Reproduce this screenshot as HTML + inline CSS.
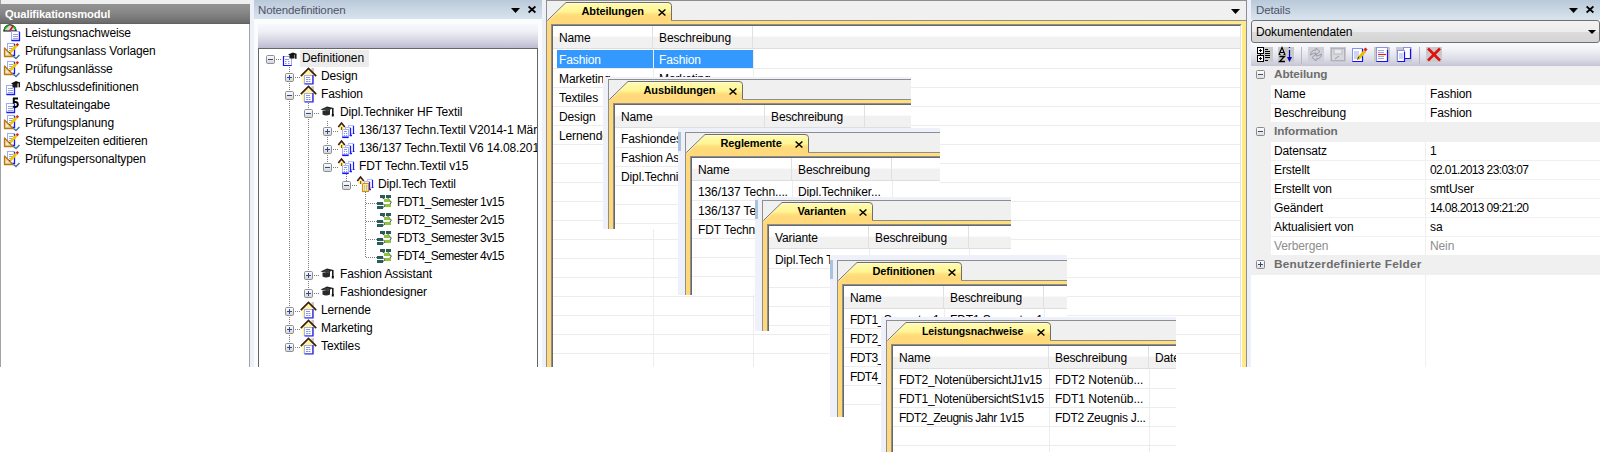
<!DOCTYPE html><html><head><meta charset="utf-8"><style>
*{margin:0;padding:0;box-sizing:border-box}
html,body{width:1600px;height:452px;overflow:hidden;background:#fff}
body{position:relative;font-family:"Liberation Sans",sans-serif;font-size:11.5px;color:#000}
.a{position:absolute}
.t{position:absolute;white-space:nowrap;line-height:14px}
svg{position:absolute;overflow:visible}
.clip{position:absolute;overflow:hidden}
</style></head><body>
<div class="a" style="left:0px;top:0px;width:1600px;height:367px;background:#eef1fa"></div>
<div class="a" style="left:0px;top:0px;width:250px;height:367px;background:#fff;border-left:1px solid #a3a3a3;border-right:1px solid #a3a3a3"></div>
<div class="a" style="left:0px;top:0px;width:250px;height:4px;background:#efefef;border-left:1px solid #a3a3a3"></div>
<div class="a" style="left:0px;top:4px;width:250px;height:20px;background:linear-gradient(#939393,#8a8a8a 35%,#7c7c7c 65%,#6c6c6c 92%,#5c5c5c)"></div>
<div class="t" style="left:5px;top:7.0px;font-size:11.2px;font-weight:bold;color:#fff;letter-spacing:-0.12px;">Qualifikationsmodul</div>
<svg style="left:3px;top:24px" width="18" height="18" viewBox="0 0 18 18"><path d="M0.8 7 A6.2 6.2 0 0 1 13.2 7 Z" fill="#d6d6d6" stroke="#000" stroke-width="1.1"/><path d="M1.8 5.2 A5.5 5.5 0 0 1 5 1.8" stroke="#10c010" stroke-width="1.8" fill="none"/><path d="M9.5 1.8 A5.5 5.5 0 0 1 12.4 5.2" stroke="#10c010" stroke-width="1.8" fill="none"/><path d="M7 6.5 L10 2" stroke="#e01010" stroke-width="1.6"/><rect x="8.5" y="7.5" width="8" height="9" fill="#fff" stroke="#a0a8f0"/><path d="M8.5 16.5 H16.5 V8" stroke="#1818ff" stroke-width="1.3" fill="none"/><path d="M10 10.5h5M10 12.5h5M10 14.5h5" stroke="#98a2dc"/></svg>
<div class="t" style="left:25px;top:25.5px;font-size:12px;color:#000;letter-spacing:-0.12px;">Leistungsnachweise</div>
<svg style="left:3px;top:42px" width="18" height="18" viewBox="0 0 18 18"><rect x="4.5" y="1.5" width="7" height="12" fill="#fff" stroke="#a0a8f0"/><path d="M4.5 13.5 H11.5 V2" stroke="#1818ff" stroke-width="1.3" fill="none"/><path d="M6 4.5h4M6 6.5h4M6 8.5h4" stroke="#98a2dc"/><path d="M1.5 6 L1.5 14.5 L10 14.5 Z" fill="#f0d8a0" stroke="#b87818" stroke-width="1.3" stroke-linejoin="round"/><path d="M3.5 10.5 L3.5 12.5 L5.5 12.5 Z" fill="#fff"/><path d="M7.5 10 L14 3" stroke="#f0c800" stroke-width="2.6"/><path d="M7.2 10.3 L6.8 11" stroke="#333" stroke-width="1.5"/><path d="M13.6 3.4 L15.2 1.8" stroke="#e02020" stroke-width="2.4"/><path d="M10.5 14.5 L13 16.5 L16.5 13" stroke="#4a78a8" stroke-width="1.6" fill="none"/></svg>
<div class="t" style="left:25px;top:43.5px;font-size:12px;color:#000;letter-spacing:-0.12px;">Prüfungsanlass Vorlagen</div>
<svg style="left:3px;top:60px" width="18" height="18" viewBox="0 0 18 18"><rect x="4.5" y="1.5" width="7" height="12" fill="#fff" stroke="#a0a8f0"/><path d="M4.5 13.5 H11.5 V2" stroke="#1818ff" stroke-width="1.3" fill="none"/><path d="M6 4.5h4M6 6.5h4M6 8.5h4" stroke="#98a2dc"/><path d="M1.5 6 L1.5 14.5 L10 14.5 Z" fill="#f0d8a0" stroke="#b87818" stroke-width="1.3" stroke-linejoin="round"/><path d="M3.5 10.5 L3.5 12.5 L5.5 12.5 Z" fill="#fff"/><path d="M7.5 10 L14 3" stroke="#f0c800" stroke-width="2.6"/><path d="M7.2 10.3 L6.8 11" stroke="#333" stroke-width="1.5"/><path d="M13.6 3.4 L15.2 1.8" stroke="#e02020" stroke-width="2.4"/><path d="M10.5 14.5 L13 16.5 L16.5 13" stroke="#4a78a8" stroke-width="1.6" fill="none"/></svg>
<div class="t" style="left:25px;top:61.5px;font-size:12px;color:#000;letter-spacing:-0.12px;">Prüfungsanlässe</div>
<svg style="left:3px;top:78px" width="18" height="18" viewBox="0 0 18 18"><rect x="3.5" y="7.5" width="8" height="9" fill="#fff" stroke="#a0a8f0"/><path d="M3.5 16.5 H11.5 V8" stroke="#1818ff" stroke-width="1.3" fill="none"/><path d="M5 10.5h5M5 12.5h5M5 14.5h5" stroke="#98a2dc"/><path d="M8 5.5 L13 3 L17 4.5 L12 7 Z" fill="#111"/><rect x="9.5" y="6" width="5" height="3.5" fill="#1a1a1a"/><path d="M16.3 4.3v5" stroke="#111" stroke-width="1.5"/></svg>
<div class="t" style="left:25px;top:79.5px;font-size:12px;color:#000;letter-spacing:-0.12px;">Abschlussdefinitionen</div>
<svg style="left:3px;top:96px" width="18" height="18" viewBox="0 0 18 18"><rect x="3.5" y="7.5" width="8" height="9" fill="#fff" stroke="#a0a8f0"/><path d="M3.5 16.5 H11.5 V8" stroke="#1818ff" stroke-width="1.3" fill="none"/><path d="M5 10.5h5M5 12.5h5M5 14.5h5" stroke="#98a2dc"/><path d="M10 2.5 H15 M10.8 2 V6.5 Q13 5.5 14.5 7 Q15.5 9 14 10.5 Q12 11.8 10 10.5" stroke="#000" stroke-width="2" fill="none"/></svg>
<div class="t" style="left:25px;top:97.5px;font-size:12px;color:#000;letter-spacing:-0.12px;">Resultateingabe</div>
<svg style="left:3px;top:114px" width="18" height="18" viewBox="0 0 18 18"><rect x="4.5" y="1.5" width="7" height="12" fill="#fff" stroke="#a0a8f0"/><path d="M4.5 13.5 H11.5 V2" stroke="#1818ff" stroke-width="1.3" fill="none"/><path d="M6 4.5h4M6 6.5h4M6 8.5h4" stroke="#98a2dc"/><path d="M1.5 6 L1.5 14.5 L10 14.5 Z" fill="#f0d8a0" stroke="#b87818" stroke-width="1.3" stroke-linejoin="round"/><path d="M3.5 10.5 L3.5 12.5 L5.5 12.5 Z" fill="#fff"/><path d="M7.5 10 L14 3" stroke="#f0c800" stroke-width="2.6"/><path d="M7.2 10.3 L6.8 11" stroke="#333" stroke-width="1.5"/><path d="M13.6 3.4 L15.2 1.8" stroke="#e02020" stroke-width="2.4"/><path d="M10.5 14.5 L13 16.5 L16.5 13" stroke="#4a78a8" stroke-width="1.6" fill="none"/></svg>
<div class="t" style="left:25px;top:115.5px;font-size:12px;color:#000;letter-spacing:-0.12px;">Prüfungsplanung</div>
<svg style="left:3px;top:132px" width="18" height="18" viewBox="0 0 18 18"><rect x="4.5" y="1.5" width="7" height="12" fill="#fff" stroke="#a0a8f0"/><path d="M4.5 13.5 H11.5 V2" stroke="#1818ff" stroke-width="1.3" fill="none"/><path d="M6 4.5h4M6 6.5h4M6 8.5h4" stroke="#98a2dc"/><path d="M1.5 6 L1.5 14.5 L10 14.5 Z" fill="#f0d8a0" stroke="#b87818" stroke-width="1.3" stroke-linejoin="round"/><path d="M3.5 10.5 L3.5 12.5 L5.5 12.5 Z" fill="#fff"/><path d="M7.5 10 L14 3" stroke="#f0c800" stroke-width="2.6"/><path d="M7.2 10.3 L6.8 11" stroke="#333" stroke-width="1.5"/><path d="M13.6 3.4 L15.2 1.8" stroke="#e02020" stroke-width="2.4"/><path d="M10.5 14.5 L13 16.5 L16.5 13" stroke="#4a78a8" stroke-width="1.6" fill="none"/></svg>
<div class="t" style="left:25px;top:133.5px;font-size:12px;color:#000;letter-spacing:-0.12px;">Stempelzeiten editieren</div>
<svg style="left:3px;top:150px" width="18" height="18" viewBox="0 0 18 18"><rect x="4.5" y="1.5" width="7" height="12" fill="#fff" stroke="#a0a8f0"/><path d="M4.5 13.5 H11.5 V2" stroke="#1818ff" stroke-width="1.3" fill="none"/><path d="M6 4.5h4M6 6.5h4M6 8.5h4" stroke="#98a2dc"/><path d="M1.5 6 L1.5 14.5 L10 14.5 Z" fill="#f0d8a0" stroke="#b87818" stroke-width="1.3" stroke-linejoin="round"/><path d="M3.5 10.5 L3.5 12.5 L5.5 12.5 Z" fill="#fff"/><path d="M7.5 10 L14 3" stroke="#f0c800" stroke-width="2.6"/><path d="M7.2 10.3 L6.8 11" stroke="#333" stroke-width="1.5"/><path d="M13.6 3.4 L15.2 1.8" stroke="#e02020" stroke-width="2.4"/><path d="M10.5 14.5 L13 16.5 L16.5 13" stroke="#4a78a8" stroke-width="1.6" fill="none"/></svg>
<div class="t" style="left:25px;top:151.5px;font-size:12px;color:#000;letter-spacing:-0.12px;">Prüfungspersonaltypen</div>
<div class="a" style="left:254px;top:0px;width:288px;height:367px;background:#fbfcfe"></div>
<div class="a" style="left:254px;top:0px;width:288px;height:19px;background:linear-gradient(#bac9d9,#d8e3ee)"></div>
<div class="t" style="left:258px;top:3.0px;font-size:11.5px;color:#50526a;letter-spacing:-0.12px;">Notendefinitionen</div>
<svg style="left:511px;top:8px" width="9" height="5" viewBox="0 0 9 5"><path d="M0 0H9L4.5 5Z" fill="#000"/></svg>
<svg style="left:528px;top:6px" width="8" height="7" viewBox="0 0 8 7"><path d="M0.6 0.5L7.4 6.5M7.4 0.5L0.6 6.5" stroke="#000" stroke-width="1.7"/></svg>
<div class="a" style="left:258px;top:24px;width:280px;height:24px;background:linear-gradient(#f7f8fc,#f0f1f6 30%,#d4d4e2 70%,#bcbcd2)"></div>
<div class="a" style="left:258px;top:48px;width:280px;height:319px;background:#fff;border:1px solid #666;border-bottom:none"></div>
<div class="clip" style="left:259px;top:49px;width:278px;height:318px">
<div class="a" style="left:30px;top:18px;width:1px;height:281px;background:repeating-linear-gradient(#7c7c7c 0 1px,transparent 1px 2px)"></div>
<div class="a" style="left:49px;top:54px;width:1px;height:191px;background:repeating-linear-gradient(#7c7c7c 0 1px,transparent 1px 2px)"></div>
<div class="a" style="left:68px;top:72px;width:1px;height:47px;background:repeating-linear-gradient(#7c7c7c 0 1px,transparent 1px 2px)"></div>
<div class="a" style="left:87px;top:125px;width:1px;height:11px;background:repeating-linear-gradient(#7c7c7c 0 1px,transparent 1px 2px)"></div>
<div class="a" style="left:106px;top:143px;width:1px;height:66px;background:repeating-linear-gradient(#7c7c7c 0 1px,transparent 1px 2px)"></div>
<div class="a" style="left:41px;top:1px;width:69px;height:17px;background:#ececec"></div>
<div class="a" style="left:17px;top:10px;width:6px;height:1px;background:repeating-linear-gradient(90deg,#7c7c7c 0 1px,transparent 1px 2px)"></div>
<svg style="left:7px;top:6px" width="9" height="9" viewBox="0 0 9 9"><defs><linearGradient id="eg" x1="0" y1="0" x2="0" y2="1"><stop offset="0" stop-color="#fff"/><stop offset="1" stop-color="#d4d4d4"/></linearGradient></defs><rect x="0.5" y="0.5" width="8" height="8" rx="1.2" fill="url(#eg)" stroke="#8f8f8f"/><path d="M2 4.5H7" stroke="#2b4a9a" stroke-width="1"/></svg>
<svg style="left:24px;top:3px" width="14" height="15" viewBox="0 0 14 15"><rect x="0.5" y="4.5" width="8" height="9" fill="#fff" stroke="#9aa6f0"/><path d="M0.5 4 V13.5 H8.5" stroke="#1010ff" stroke-width="1.2" fill="none"/><path d="M2 7.5h4M2 9.5h1.5M5 9.5h1.5M2 11.5h1.5M5 11.5h1.5" stroke="#8a96d8"/><path d="M5 2.5 L10 0.5 L13.5 2 L8.5 4 Z" fill="#111"/><rect x="6.5" y="3" width="5" height="3.5" fill="#1a1a1a"/><path d="M12.8 1.8v5" stroke="#111" stroke-width="1.5"/></svg>
<div class="t" style="left:43px;top:1.5px;font-size:12px;color:#000;letter-spacing:-0.12px;">Definitionen</div>
<div class="a" style="left:36px;top:28px;width:6px;height:1px;background:repeating-linear-gradient(90deg,#7c7c7c 0 1px,transparent 1px 2px)"></div>
<svg style="left:26px;top:24px" width="9" height="9" viewBox="0 0 9 9"><defs><linearGradient id="eg" x1="0" y1="0" x2="0" y2="1"><stop offset="0" stop-color="#fff"/><stop offset="1" stop-color="#d4d4d4"/></linearGradient></defs><rect x="0.5" y="0.5" width="8" height="8" rx="1.2" fill="url(#eg)" stroke="#8f8f8f"/><path d="M2 4.5H7" stroke="#2b4a9a" stroke-width="1"/><path d="M4.5 2V7" stroke="#2b4a9a" stroke-width="1"/></svg>
<svg style="left:41px;top:18px" width="18" height="18" viewBox="0 0 18 18"><rect x="11.5" y="1" width="2.5" height="6" fill="#c8c8c8"/><path d="M2.5 8 L2.5 17 L14.5 17 L14.5 8 L8.5 2.5 Z" fill="#fff5a0"/><path d="M0.8 9.2 L8.5 1.5 L16.2 9.2" fill="none" stroke="#3c1e0a" stroke-width="1.7"/><rect x="4.5" y="8.5" width="8" height="8" fill="#fff" stroke="#a8b0f0"/><path d="M4.5 17 H13 V8" stroke="#1a1aff" stroke-width="1.2" fill="none"/><path d="M6 10.5h4M6 12.5h2M8.5 12.5h2M6 14.5h2M8.5 14.5h2" stroke="#8a96d8"/></svg>
<div class="t" style="left:62px;top:19.5px;font-size:12px;color:#000;letter-spacing:-0.12px;">Design</div>
<div class="a" style="left:36px;top:46px;width:6px;height:1px;background:repeating-linear-gradient(90deg,#7c7c7c 0 1px,transparent 1px 2px)"></div>
<svg style="left:26px;top:42px" width="9" height="9" viewBox="0 0 9 9"><defs><linearGradient id="eg" x1="0" y1="0" x2="0" y2="1"><stop offset="0" stop-color="#fff"/><stop offset="1" stop-color="#d4d4d4"/></linearGradient></defs><rect x="0.5" y="0.5" width="8" height="8" rx="1.2" fill="url(#eg)" stroke="#8f8f8f"/><path d="M2 4.5H7" stroke="#2b4a9a" stroke-width="1"/></svg>
<svg style="left:41px;top:36px" width="18" height="18" viewBox="0 0 18 18"><rect x="11.5" y="1" width="2.5" height="6" fill="#c8c8c8"/><path d="M2.5 8 L2.5 17 L14.5 17 L14.5 8 L8.5 2.5 Z" fill="#fff5a0"/><path d="M0.8 9.2 L8.5 1.5 L16.2 9.2" fill="none" stroke="#3c1e0a" stroke-width="1.7"/><rect x="4.5" y="8.5" width="8" height="8" fill="#fff" stroke="#a8b0f0"/><path d="M4.5 17 H13 V8" stroke="#1a1aff" stroke-width="1.2" fill="none"/><path d="M6 10.5h4M6 12.5h2M8.5 12.5h2M6 14.5h2M8.5 14.5h2" stroke="#8a96d8"/></svg>
<div class="t" style="left:62px;top:37.5px;font-size:12px;color:#000;letter-spacing:-0.12px;">Fashion</div>
<div class="a" style="left:55px;top:64px;width:6px;height:1px;background:repeating-linear-gradient(90deg,#7c7c7c 0 1px,transparent 1px 2px)"></div>
<svg style="left:45px;top:60px" width="9" height="9" viewBox="0 0 9 9"><defs><linearGradient id="eg" x1="0" y1="0" x2="0" y2="1"><stop offset="0" stop-color="#fff"/><stop offset="1" stop-color="#d4d4d4"/></linearGradient></defs><rect x="0.5" y="0.5" width="8" height="8" rx="1.2" fill="url(#eg)" stroke="#8f8f8f"/><path d="M2 4.5H7" stroke="#2b4a9a" stroke-width="1"/></svg>
<svg style="left:61px;top:57px" width="14" height="11" viewBox="0 0 14 11"><path d="M0.5 3.5 L7 0.5 L13.5 2 L7 5 Z" fill="#222"/><path d="M2.5 4.5 L2.5 8.5 Q6 10.5 10 8.5 L10 3.5 L7 5 Z" fill="#2a2a2a"/><path d="M3.5 3.5 Q7 2.5 9 3" stroke="#666" stroke-width="0.7" fill="none"/><path d="M12.8 2 V9" stroke="#111" stroke-width="1.5"/><rect x="11.8" y="8" width="2" height="2.5" fill="#111"/></svg>
<div class="t" style="left:81px;top:55.5px;font-size:12px;color:#000;letter-spacing:-0.12px;">Dipl.Techniker HF Textil</div>
<div class="a" style="left:74px;top:82px;width:6px;height:1px;background:repeating-linear-gradient(90deg,#7c7c7c 0 1px,transparent 1px 2px)"></div>
<svg style="left:64px;top:78px" width="9" height="9" viewBox="0 0 9 9"><defs><linearGradient id="eg" x1="0" y1="0" x2="0" y2="1"><stop offset="0" stop-color="#fff"/><stop offset="1" stop-color="#d4d4d4"/></linearGradient></defs><rect x="0.5" y="0.5" width="8" height="8" rx="1.2" fill="url(#eg)" stroke="#8f8f8f"/><path d="M2 4.5H7" stroke="#2b4a9a" stroke-width="1"/><path d="M4.5 2V7" stroke="#2b4a9a" stroke-width="1"/></svg>
<svg style="left:79px;top:73px" width="17" height="17" viewBox="0 0 17 17"><rect x="10.5" y="3.5" width="5" height="8" fill="#fff" stroke="#b8c0f8"/><path d="M15.5 4 V11.5 H16.5" stroke="#1a1aff" stroke-width="1.2" fill="none"/><rect x="7.5" y="5.5" width="5" height="8" fill="#fff" stroke="#b0b8f8"/><path d="M12.5 6 V13.5 H14" stroke="#1a1aff" stroke-width="1.3" fill="none"/><rect x="4.5" y="7.5" width="6" height="8" fill="#fff" stroke="#a8b0f8"/><path d="M4.3 15.3 H10.5" stroke="#1010ff" stroke-width="1.6"/><path d="M6 9.5h3" stroke="#8890e8"/><rect x="5.8" y="11" width="1.2" height="1" fill="#8890e8"/><rect x="8" y="11" width="1.2" height="1" fill="#8890e8"/><rect x="5.8" y="13" width="1.2" height="1" fill="#8890e8"/><rect x="8" y="13" width="1.2" height="1" fill="#8890e8"/><rect x="1.5" y="4" width="4" height="4" fill="#fff080"/><rect x="3" y="5" width="1.2" height="3" fill="#8a5a20"/><path d="M0.3 5 L3.5 1 L6.8 5" fill="none" stroke="#3c1e0a" stroke-width="1.6"/></svg>
<div class="t" style="left:100px;top:73.5px;font-size:12px;color:#000;letter-spacing:-0.12px;">136/137 Techn.Textil V2014-1 März</div>
<div class="a" style="left:74px;top:100px;width:6px;height:1px;background:repeating-linear-gradient(90deg,#7c7c7c 0 1px,transparent 1px 2px)"></div>
<svg style="left:64px;top:96px" width="9" height="9" viewBox="0 0 9 9"><defs><linearGradient id="eg" x1="0" y1="0" x2="0" y2="1"><stop offset="0" stop-color="#fff"/><stop offset="1" stop-color="#d4d4d4"/></linearGradient></defs><rect x="0.5" y="0.5" width="8" height="8" rx="1.2" fill="url(#eg)" stroke="#8f8f8f"/><path d="M2 4.5H7" stroke="#2b4a9a" stroke-width="1"/><path d="M4.5 2V7" stroke="#2b4a9a" stroke-width="1"/></svg>
<svg style="left:79px;top:91px" width="17" height="17" viewBox="0 0 17 17"><rect x="10.5" y="3.5" width="5" height="8" fill="#fff" stroke="#b8c0f8"/><path d="M15.5 4 V11.5 H16.5" stroke="#1a1aff" stroke-width="1.2" fill="none"/><rect x="7.5" y="5.5" width="5" height="8" fill="#fff" stroke="#b0b8f8"/><path d="M12.5 6 V13.5 H14" stroke="#1a1aff" stroke-width="1.3" fill="none"/><rect x="4.5" y="7.5" width="6" height="8" fill="#fff" stroke="#a8b0f8"/><path d="M4.3 15.3 H10.5" stroke="#1010ff" stroke-width="1.6"/><path d="M6 9.5h3" stroke="#8890e8"/><rect x="5.8" y="11" width="1.2" height="1" fill="#8890e8"/><rect x="8" y="11" width="1.2" height="1" fill="#8890e8"/><rect x="5.8" y="13" width="1.2" height="1" fill="#8890e8"/><rect x="8" y="13" width="1.2" height="1" fill="#8890e8"/><rect x="1.5" y="4" width="4" height="4" fill="#fff080"/><rect x="3" y="5" width="1.2" height="3" fill="#8a5a20"/><path d="M0.3 5 L3.5 1 L6.8 5" fill="none" stroke="#3c1e0a" stroke-width="1.6"/></svg>
<div class="t" style="left:100px;top:91.5px;font-size:12px;color:#000;letter-spacing:-0.12px;">136/137 Techn.Textil V6 14.08.2013</div>
<div class="a" style="left:74px;top:118px;width:6px;height:1px;background:repeating-linear-gradient(90deg,#7c7c7c 0 1px,transparent 1px 2px)"></div>
<svg style="left:64px;top:114px" width="9" height="9" viewBox="0 0 9 9"><defs><linearGradient id="eg" x1="0" y1="0" x2="0" y2="1"><stop offset="0" stop-color="#fff"/><stop offset="1" stop-color="#d4d4d4"/></linearGradient></defs><rect x="0.5" y="0.5" width="8" height="8" rx="1.2" fill="url(#eg)" stroke="#8f8f8f"/><path d="M2 4.5H7" stroke="#2b4a9a" stroke-width="1"/></svg>
<svg style="left:79px;top:109px" width="17" height="17" viewBox="0 0 17 17"><rect x="10.5" y="3.5" width="5" height="8" fill="#fff" stroke="#b8c0f8"/><path d="M15.5 4 V11.5 H16.5" stroke="#1a1aff" stroke-width="1.2" fill="none"/><rect x="7.5" y="5.5" width="5" height="8" fill="#fff" stroke="#b0b8f8"/><path d="M12.5 6 V13.5 H14" stroke="#1a1aff" stroke-width="1.3" fill="none"/><rect x="4.5" y="7.5" width="6" height="8" fill="#fff" stroke="#a8b0f8"/><path d="M4.3 15.3 H10.5" stroke="#1010ff" stroke-width="1.6"/><path d="M6 9.5h3" stroke="#8890e8"/><rect x="5.8" y="11" width="1.2" height="1" fill="#8890e8"/><rect x="8" y="11" width="1.2" height="1" fill="#8890e8"/><rect x="5.8" y="13" width="1.2" height="1" fill="#8890e8"/><rect x="8" y="13" width="1.2" height="1" fill="#8890e8"/><rect x="1.5" y="4" width="4" height="4" fill="#fff080"/><rect x="3" y="5" width="1.2" height="3" fill="#8a5a20"/><path d="M0.3 5 L3.5 1 L6.8 5" fill="none" stroke="#3c1e0a" stroke-width="1.6"/></svg>
<div class="t" style="left:100px;top:109.5px;font-size:12px;color:#000;letter-spacing:-0.12px;">FDT Techn.Textil v15</div>
<div class="a" style="left:93px;top:136px;width:6px;height:1px;background:repeating-linear-gradient(90deg,#7c7c7c 0 1px,transparent 1px 2px)"></div>
<svg style="left:83px;top:132px" width="9" height="9" viewBox="0 0 9 9"><defs><linearGradient id="eg" x1="0" y1="0" x2="0" y2="1"><stop offset="0" stop-color="#fff"/><stop offset="1" stop-color="#d4d4d4"/></linearGradient></defs><rect x="0.5" y="0.5" width="8" height="8" rx="1.2" fill="url(#eg)" stroke="#8f8f8f"/><path d="M2 4.5H7" stroke="#2b4a9a" stroke-width="1"/></svg>
<svg style="left:98px;top:127px" width="17" height="17" viewBox="0 0 17 17"><rect x="10.5" y="3.5" width="5" height="8" fill="#fff" stroke="#b8c0f8"/><path d="M15.5 4 V11.5 H16.5" stroke="#1a1aff" stroke-width="1.2" fill="none"/><rect x="7.5" y="5.5" width="5" height="8" fill="#fff" stroke="#b0b8f8"/><path d="M12.5 6 V13.5 H14" stroke="#1a1aff" stroke-width="1.3" fill="none"/><rect x="5.5" y="7.5" width="6" height="8" fill="#fff8a8" stroke="#d88a20" stroke-width="1.2"/><rect x="7" y="9.5" width="1.2" height="1" fill="#60a060"/><rect x="9" y="9.5" width="1.2" height="1" fill="#c06040"/><rect x="7" y="11.5" width="1.2" height="1" fill="#909090"/><rect x="9" y="11.5" width="1.2" height="1" fill="#909090"/><rect x="7" y="13.5" width="1.2" height="1" fill="#60c060"/><rect x="9" y="13.5" width="1.2" height="1" fill="#60c060"/><rect x="1.5" y="4" width="4" height="4" fill="#fff080"/><rect x="3" y="5" width="1.2" height="3" fill="#8a5a20"/><path d="M0.3 5 L3.5 1 L6.8 5" fill="none" stroke="#3c1e0a" stroke-width="1.6"/></svg>
<div class="t" style="left:119px;top:127.5px;font-size:12px;color:#000;letter-spacing:-0.12px;">Dipl.Tech Textil</div>
<div class="a" style="left:107px;top:154px;width:11px;height:1px;background:repeating-linear-gradient(90deg,#7c7c7c 0 1px,transparent 1px 2px)"></div>
<svg style="left:118px;top:146px" width="16" height="15" viewBox="0 0 16 15"><rect x="3" y="0" width="5" height="3" fill="#2b5c5c"/><rect x="9" y="0" width="5" height="3" fill="#2b5c5c"/><path d="M5.5 3 L9 5 M11.5 3 L10 5" stroke="#111" stroke-width="0.8"/><rect x="7" y="4" width="6" height="3" fill="#8cc63c"/><path d="M13 5.5 Q15.5 7 13 9" stroke="#111" stroke-width="0.8" fill="none"/><rect x="0" y="7" width="6" height="3" fill="#2b5c5c"/><rect x="0" y="11" width="6" height="3" fill="#2b5c5c"/><rect x="8" y="9" width="6" height="3" fill="#8cc63c"/><path d="M6 8.5 Q7 10 8 10.5 M6 12.5 Q7 11.5 8 11" stroke="#111" stroke-width="0.8" fill="none"/></svg>
<div class="t" style="left:138px;top:145.5px;font-size:12px;color:#000;letter-spacing:-0.59px;">FDT1_Semester 1v15</div>
<div class="a" style="left:107px;top:172px;width:11px;height:1px;background:repeating-linear-gradient(90deg,#7c7c7c 0 1px,transparent 1px 2px)"></div>
<svg style="left:118px;top:164px" width="16" height="15" viewBox="0 0 16 15"><rect x="3" y="0" width="5" height="3" fill="#2b5c5c"/><rect x="9" y="0" width="5" height="3" fill="#2b5c5c"/><path d="M5.5 3 L9 5 M11.5 3 L10 5" stroke="#111" stroke-width="0.8"/><rect x="7" y="4" width="6" height="3" fill="#8cc63c"/><path d="M13 5.5 Q15.5 7 13 9" stroke="#111" stroke-width="0.8" fill="none"/><rect x="0" y="7" width="6" height="3" fill="#2b5c5c"/><rect x="0" y="11" width="6" height="3" fill="#2b5c5c"/><rect x="8" y="9" width="6" height="3" fill="#8cc63c"/><path d="M6 8.5 Q7 10 8 10.5 M6 12.5 Q7 11.5 8 11" stroke="#111" stroke-width="0.8" fill="none"/></svg>
<div class="t" style="left:138px;top:163.5px;font-size:12px;color:#000;letter-spacing:-0.59px;">FDT2_Semester 2v15</div>
<div class="a" style="left:107px;top:190px;width:11px;height:1px;background:repeating-linear-gradient(90deg,#7c7c7c 0 1px,transparent 1px 2px)"></div>
<svg style="left:118px;top:182px" width="16" height="15" viewBox="0 0 16 15"><rect x="3" y="0" width="5" height="3" fill="#2b5c5c"/><rect x="9" y="0" width="5" height="3" fill="#2b5c5c"/><path d="M5.5 3 L9 5 M11.5 3 L10 5" stroke="#111" stroke-width="0.8"/><rect x="7" y="4" width="6" height="3" fill="#8cc63c"/><path d="M13 5.5 Q15.5 7 13 9" stroke="#111" stroke-width="0.8" fill="none"/><rect x="0" y="7" width="6" height="3" fill="#2b5c5c"/><rect x="0" y="11" width="6" height="3" fill="#2b5c5c"/><rect x="8" y="9" width="6" height="3" fill="#8cc63c"/><path d="M6 8.5 Q7 10 8 10.5 M6 12.5 Q7 11.5 8 11" stroke="#111" stroke-width="0.8" fill="none"/></svg>
<div class="t" style="left:138px;top:181.5px;font-size:12px;color:#000;letter-spacing:-0.59px;">FDT3_Semester 3v15</div>
<div class="a" style="left:107px;top:208px;width:11px;height:1px;background:repeating-linear-gradient(90deg,#7c7c7c 0 1px,transparent 1px 2px)"></div>
<svg style="left:118px;top:200px" width="16" height="15" viewBox="0 0 16 15"><rect x="3" y="0" width="5" height="3" fill="#2b5c5c"/><rect x="9" y="0" width="5" height="3" fill="#2b5c5c"/><path d="M5.5 3 L9 5 M11.5 3 L10 5" stroke="#111" stroke-width="0.8"/><rect x="7" y="4" width="6" height="3" fill="#8cc63c"/><path d="M13 5.5 Q15.5 7 13 9" stroke="#111" stroke-width="0.8" fill="none"/><rect x="0" y="7" width="6" height="3" fill="#2b5c5c"/><rect x="0" y="11" width="6" height="3" fill="#2b5c5c"/><rect x="8" y="9" width="6" height="3" fill="#8cc63c"/><path d="M6 8.5 Q7 10 8 10.5 M6 12.5 Q7 11.5 8 11" stroke="#111" stroke-width="0.8" fill="none"/></svg>
<div class="t" style="left:138px;top:199.5px;font-size:12px;color:#000;letter-spacing:-0.59px;">FDT4_Semester 4v15</div>
<div class="a" style="left:55px;top:226px;width:6px;height:1px;background:repeating-linear-gradient(90deg,#7c7c7c 0 1px,transparent 1px 2px)"></div>
<svg style="left:45px;top:222px" width="9" height="9" viewBox="0 0 9 9"><defs><linearGradient id="eg" x1="0" y1="0" x2="0" y2="1"><stop offset="0" stop-color="#fff"/><stop offset="1" stop-color="#d4d4d4"/></linearGradient></defs><rect x="0.5" y="0.5" width="8" height="8" rx="1.2" fill="url(#eg)" stroke="#8f8f8f"/><path d="M2 4.5H7" stroke="#2b4a9a" stroke-width="1"/><path d="M4.5 2V7" stroke="#2b4a9a" stroke-width="1"/></svg>
<svg style="left:61px;top:219px" width="14" height="11" viewBox="0 0 14 11"><path d="M0.5 3.5 L7 0.5 L13.5 2 L7 5 Z" fill="#222"/><path d="M2.5 4.5 L2.5 8.5 Q6 10.5 10 8.5 L10 3.5 L7 5 Z" fill="#2a2a2a"/><path d="M3.5 3.5 Q7 2.5 9 3" stroke="#666" stroke-width="0.7" fill="none"/><path d="M12.8 2 V9" stroke="#111" stroke-width="1.5"/><rect x="11.8" y="8" width="2" height="2.5" fill="#111"/></svg>
<div class="t" style="left:81px;top:217.5px;font-size:12px;color:#000;letter-spacing:-0.12px;">Fashion Assistant</div>
<div class="a" style="left:55px;top:244px;width:6px;height:1px;background:repeating-linear-gradient(90deg,#7c7c7c 0 1px,transparent 1px 2px)"></div>
<svg style="left:45px;top:240px" width="9" height="9" viewBox="0 0 9 9"><defs><linearGradient id="eg" x1="0" y1="0" x2="0" y2="1"><stop offset="0" stop-color="#fff"/><stop offset="1" stop-color="#d4d4d4"/></linearGradient></defs><rect x="0.5" y="0.5" width="8" height="8" rx="1.2" fill="url(#eg)" stroke="#8f8f8f"/><path d="M2 4.5H7" stroke="#2b4a9a" stroke-width="1"/><path d="M4.5 2V7" stroke="#2b4a9a" stroke-width="1"/></svg>
<svg style="left:61px;top:237px" width="14" height="11" viewBox="0 0 14 11"><path d="M0.5 3.5 L7 0.5 L13.5 2 L7 5 Z" fill="#222"/><path d="M2.5 4.5 L2.5 8.5 Q6 10.5 10 8.5 L10 3.5 L7 5 Z" fill="#2a2a2a"/><path d="M3.5 3.5 Q7 2.5 9 3" stroke="#666" stroke-width="0.7" fill="none"/><path d="M12.8 2 V9" stroke="#111" stroke-width="1.5"/><rect x="11.8" y="8" width="2" height="2.5" fill="#111"/></svg>
<div class="t" style="left:81px;top:235.5px;font-size:12px;color:#000;letter-spacing:-0.12px;">Fashiondesigner</div>
<div class="a" style="left:36px;top:262px;width:6px;height:1px;background:repeating-linear-gradient(90deg,#7c7c7c 0 1px,transparent 1px 2px)"></div>
<svg style="left:26px;top:258px" width="9" height="9" viewBox="0 0 9 9"><defs><linearGradient id="eg" x1="0" y1="0" x2="0" y2="1"><stop offset="0" stop-color="#fff"/><stop offset="1" stop-color="#d4d4d4"/></linearGradient></defs><rect x="0.5" y="0.5" width="8" height="8" rx="1.2" fill="url(#eg)" stroke="#8f8f8f"/><path d="M2 4.5H7" stroke="#2b4a9a" stroke-width="1"/><path d="M4.5 2V7" stroke="#2b4a9a" stroke-width="1"/></svg>
<svg style="left:41px;top:252px" width="18" height="18" viewBox="0 0 18 18"><rect x="11.5" y="1" width="2.5" height="6" fill="#c8c8c8"/><path d="M2.5 8 L2.5 17 L14.5 17 L14.5 8 L8.5 2.5 Z" fill="#fff5a0"/><path d="M0.8 9.2 L8.5 1.5 L16.2 9.2" fill="none" stroke="#3c1e0a" stroke-width="1.7"/><rect x="4.5" y="8.5" width="8" height="8" fill="#fff" stroke="#a8b0f0"/><path d="M4.5 17 H13 V8" stroke="#1a1aff" stroke-width="1.2" fill="none"/><path d="M6 10.5h4M6 12.5h2M8.5 12.5h2M6 14.5h2M8.5 14.5h2" stroke="#8a96d8"/></svg>
<div class="t" style="left:62px;top:253.5px;font-size:12px;color:#000;letter-spacing:-0.12px;">Lernende</div>
<div class="a" style="left:36px;top:280px;width:6px;height:1px;background:repeating-linear-gradient(90deg,#7c7c7c 0 1px,transparent 1px 2px)"></div>
<svg style="left:26px;top:276px" width="9" height="9" viewBox="0 0 9 9"><defs><linearGradient id="eg" x1="0" y1="0" x2="0" y2="1"><stop offset="0" stop-color="#fff"/><stop offset="1" stop-color="#d4d4d4"/></linearGradient></defs><rect x="0.5" y="0.5" width="8" height="8" rx="1.2" fill="url(#eg)" stroke="#8f8f8f"/><path d="M2 4.5H7" stroke="#2b4a9a" stroke-width="1"/><path d="M4.5 2V7" stroke="#2b4a9a" stroke-width="1"/></svg>
<svg style="left:41px;top:270px" width="18" height="18" viewBox="0 0 18 18"><rect x="11.5" y="1" width="2.5" height="6" fill="#c8c8c8"/><path d="M2.5 8 L2.5 17 L14.5 17 L14.5 8 L8.5 2.5 Z" fill="#fff5a0"/><path d="M0.8 9.2 L8.5 1.5 L16.2 9.2" fill="none" stroke="#3c1e0a" stroke-width="1.7"/><rect x="4.5" y="8.5" width="8" height="8" fill="#fff" stroke="#a8b0f0"/><path d="M4.5 17 H13 V8" stroke="#1a1aff" stroke-width="1.2" fill="none"/><path d="M6 10.5h4M6 12.5h2M8.5 12.5h2M6 14.5h2M8.5 14.5h2" stroke="#8a96d8"/></svg>
<div class="t" style="left:62px;top:271.5px;font-size:12px;color:#000;letter-spacing:-0.12px;">Marketing</div>
<div class="a" style="left:36px;top:298px;width:6px;height:1px;background:repeating-linear-gradient(90deg,#7c7c7c 0 1px,transparent 1px 2px)"></div>
<svg style="left:26px;top:294px" width="9" height="9" viewBox="0 0 9 9"><defs><linearGradient id="eg" x1="0" y1="0" x2="0" y2="1"><stop offset="0" stop-color="#fff"/><stop offset="1" stop-color="#d4d4d4"/></linearGradient></defs><rect x="0.5" y="0.5" width="8" height="8" rx="1.2" fill="url(#eg)" stroke="#8f8f8f"/><path d="M2 4.5H7" stroke="#2b4a9a" stroke-width="1"/><path d="M4.5 2V7" stroke="#2b4a9a" stroke-width="1"/></svg>
<svg style="left:41px;top:288px" width="18" height="18" viewBox="0 0 18 18"><rect x="11.5" y="1" width="2.5" height="6" fill="#c8c8c8"/><path d="M2.5 8 L2.5 17 L14.5 17 L14.5 8 L8.5 2.5 Z" fill="#fff5a0"/><path d="M0.8 9.2 L8.5 1.5 L16.2 9.2" fill="none" stroke="#3c1e0a" stroke-width="1.7"/><rect x="4.5" y="8.5" width="8" height="8" fill="#fff" stroke="#a8b0f0"/><path d="M4.5 17 H13 V8" stroke="#1a1aff" stroke-width="1.2" fill="none"/><path d="M6 10.5h4M6 12.5h2M8.5 12.5h2M6 14.5h2M8.5 14.5h2" stroke="#8a96d8"/></svg>
<div class="t" style="left:62px;top:289.5px;font-size:12px;color:#000;letter-spacing:-0.12px;">Textiles</div>
</div>
<div class="a" style="left:1251px;top:0px;width:349px;height:367px;background:#fff"></div>
<div class="a" style="left:1251px;top:0px;width:349px;height:20px;background:linear-gradient(#b9c9d9,#d9e4ee)"></div>
<div class="t" style="left:1256px;top:3.0px;font-size:11.5px;color:#50526a;letter-spacing:-0.12px;">Details</div>
<svg style="left:1569px;top:8px" width="9" height="5" viewBox="0 0 9 5"><path d="M0 0H9L4.5 5Z" fill="#000"/></svg>
<svg style="left:1586px;top:6px" width="8" height="7" viewBox="0 0 8 7"><path d="M0.6 0.5L7.4 6.5M7.4 0.5L0.6 6.5" stroke="#000" stroke-width="1.7"/></svg>
<div class="a" style="left:1251px;top:20px;width:349px;height:23px;background:linear-gradient(#f3f3f3,#ececec 50%,#dcdcdc 51%,#d4d4d4);border:1px solid #707070;border-radius:3px"></div>
<div class="t" style="left:1256px;top:25.0px;font-size:12px;color:#000;letter-spacing:-0.12px;">Dokumentendaten</div>
<svg style="left:1588px;top:30px" width="8" height="4" viewBox="0 0 8 4"><path d="M0 0H8L4.0 4Z" fill="#000"/></svg>
<div class="a" style="left:1251px;top:43px;width:349px;height:23px;background:linear-gradient(#f9fafd,#f2f4f8 25%,#dcdce8 70%,#c4c4d4)"></div>
<svg style="left:1257px;top:47px" width="16" height="16" viewBox="0 0 16 16"><rect width="16" height="15" fill="#cacaca"/><rect x="0.5" y="0.5" width="6" height="6" fill="#fff" stroke="#000"/><path d="M2 3.5h3M3.5 2v3" stroke="#000"/><path d="M3.5 7v2" stroke="#000"/><rect x="0.5" y="8.5" width="6" height="6" fill="#fff" stroke="#000"/><path d="M2 11.5h3M3.5 10v3" stroke="#000"/><path d="M8 2.5h3M8 4.5h5M8 6.5h5M8 8.5h5M8 10.5h5M8 13.5h3" stroke="#000"/></svg>
<svg style="left:1278px;top:47px" width="16" height="16" viewBox="0 0 16 16"><rect width="16" height="15" fill="#c9c9c9"/><path d="M1 7.5 L4 0.5 L7 7.5 M2 5.5h4M0.5 7.5h2M5.5 7.5h2" stroke="#000" fill="none" stroke-width="1.1"/><path d="M1.5 9.5h5L1.5 14.5h5.5" stroke="#000" fill="none" stroke-width="1.3"/><path d="M11.5 0v1M11.5 3v10" stroke="#0000c0" stroke-width="1.2"/><path d="M9 10h5l-2.5 5z" fill="#0000c0"/></svg>
<div class="a" style="left:1301px;top:47px;width:1px;height:17px;background:#b8b8c4"></div>
<svg style="left:1308px;top:47px" width="16" height="16" viewBox="0 0 16 16"><rect width="16" height="15" fill="#d0d0d8"/><path d="M2.5 8 Q3 3 8 3 L8 1 L12 4.5 L8 8 L8 6 Q5 6 2.5 8 Z" fill="none" stroke="#9a9aaa"/><path d="M13.5 7 Q13 12 8 12 L8 14 L4 10.5 L8 7 L8 9 Q11 9 13.5 7 Z" fill="none" stroke="#9a9aaa"/></svg>
<svg style="left:1330px;top:47px" width="16" height="16" viewBox="0 0 16 16"><rect width="16" height="15" fill="#c8c8cc"/><rect x="1.5" y="1.5" width="13" height="12" fill="#d8d8dc" stroke="#b0b0b8"/><rect x="4" y="2" width="8" height="5" fill="#e8e8ee" stroke="#b8b8c0"/><path d="M5 12 L9 9" stroke="#9a9aa4"/></svg>
<svg style="left:1352px;top:47px" width="16" height="16" viewBox="0 0 16 16"><rect x="0.5" y="1.5" width="10" height="13" fill="#fff" stroke="#8890f0"/><path d="M0.5 14.5h10V2" stroke="#1010ff" stroke-width="1.2" fill="none"/><path d="M2 5h5M2 7h5M2 9h5M2 11h4" stroke="#a0a8e0"/><path d="M6 12 L13 4" stroke="#e8c000" stroke-width="3"/><path d="M5.5 12.5l1.5-3" stroke="#333"/><path d="M12.5 3.5 L14.5 1.5" stroke="#e02020" stroke-width="3"/></svg>
<svg style="left:1374px;top:47px" width="16" height="16" viewBox="0 0 16 16"><rect width="16" height="15" fill="#c9c9c9"/><rect x="2.5" y="0.5" width="11" height="14" fill="#fff" stroke="#8890f0"/><path d="M2.5 14.5h11V3" stroke="#1010ff" stroke-width="1.2" fill="none"/><path d="M4 3.5h6M4 5.5h6M4 9.5h6M4 11.5h6" stroke="#a0a8e0"/><path d="M4 7.5h8" stroke="#e02020" stroke-width="1.2"/></svg>
<svg style="left:1396px;top:47px" width="16" height="16" viewBox="0 0 16 16"><rect width="16" height="15" fill="#c9c9c9"/><rect x="7.5" y="0.5" width="7" height="11" fill="#fff" stroke="#8890f0"/><path d="M7.5 11.5h7V2" stroke="#1010ff" stroke-width="1.2" fill="none"/><rect x="1.5" y="3.5" width="7" height="11" fill="#fff" stroke="#8890f0"/><path d="M1.5 14.5h7V5" stroke="#1010ff" stroke-width="1.2" fill="none"/><path d="M3 7h4M3 9h4M3 11h4" stroke="#a0a8e0"/></svg>
<div class="a" style="left:1419px;top:47px;width:1px;height:17px;background:#b8b8c4"></div>
<svg style="left:1426px;top:47px" width="16" height="16" viewBox="0 0 16 16"><rect width="16" height="15" fill="#c9c9c9"/><path d="M2 1.5 L14 13.5 M14 1.5 L2 13.5" stroke="#e01010" stroke-width="2.6"/></svg>
<div class="a" style="left:1251px;top:66px;width:349px;height:301px;background:#fff"></div>
<div class="a" style="left:1251px;top:66px;width:20px;height:209px;background:#f0f0f0"></div>
<div class="a" style="left:1425px;top:66px;width:1px;height:301px;background:#f0f0f0"></div>
<div class="a" style="left:1251px;top:66px;width:349px;height:19px;background:#f0f0f0"></div>
<svg style="left:1256px;top:70px" width="9" height="9" viewBox="0 0 9 9"><defs><linearGradient id="pg" x1="0" y1="0" x2="0" y2="1"><stop offset="0" stop-color="#fff"/><stop offset="1" stop-color="#dcdcdc"/></linearGradient></defs><rect x="0.5" y="0.5" width="8" height="8" rx="1" fill="url(#pg)" stroke="#8a8a8a"/><path d="M2 4.5H7" stroke="#3a4a7a"/></svg>
<div class="t" style="left:1274px;top:67.0px;font-size:11.8px;font-weight:bold;color:#6d6d6d;letter-spacing:-0.12px;">Abteilung</div>
<div class="a" style="left:1271px;top:103px;width:329px;height:1px;background:#f0f0f0"></div>
<div class="t" style="left:1274px;top:87.0px;font-size:12px;color:#000;letter-spacing:-0.12px;">Name</div>
<div class="t" style="left:1430px;top:87.0px;font-size:12px;color:#000;letter-spacing:-0.12px;">Fashion</div>
<div class="a" style="left:1271px;top:122px;width:329px;height:1px;background:#f0f0f0"></div>
<div class="t" style="left:1274px;top:106.0px;font-size:12px;color:#000;letter-spacing:-0.12px;">Beschreibung</div>
<div class="t" style="left:1430px;top:106.0px;font-size:12px;color:#000;letter-spacing:-0.12px;">Fashion</div>
<div class="a" style="left:1251px;top:123px;width:349px;height:19px;background:#f0f0f0"></div>
<svg style="left:1256px;top:127px" width="9" height="9" viewBox="0 0 9 9"><defs><linearGradient id="pg" x1="0" y1="0" x2="0" y2="1"><stop offset="0" stop-color="#fff"/><stop offset="1" stop-color="#dcdcdc"/></linearGradient></defs><rect x="0.5" y="0.5" width="8" height="8" rx="1" fill="url(#pg)" stroke="#8a8a8a"/><path d="M2 4.5H7" stroke="#3a4a7a"/></svg>
<div class="t" style="left:1274px;top:124.0px;font-size:11.8px;font-weight:bold;color:#6d6d6d;letter-spacing:-0.12px;">Information</div>
<div class="a" style="left:1271px;top:160px;width:329px;height:1px;background:#f0f0f0"></div>
<div class="t" style="left:1274px;top:144.0px;font-size:12px;color:#000;letter-spacing:-0.12px;">Datensatz</div>
<div class="t" style="left:1430px;top:144.0px;font-size:12px;color:#000;letter-spacing:-0.12px;">1</div>
<div class="a" style="left:1271px;top:179px;width:329px;height:1px;background:#f0f0f0"></div>
<div class="t" style="left:1274px;top:163.0px;font-size:12px;color:#000;letter-spacing:-0.12px;">Erstellt</div>
<div class="t" style="left:1430px;top:163.0px;font-size:12px;color:#000;letter-spacing:-0.62px;">02.01.2013 23:03:07</div>
<div class="a" style="left:1271px;top:198px;width:329px;height:1px;background:#f0f0f0"></div>
<div class="t" style="left:1274px;top:182.0px;font-size:12px;color:#000;letter-spacing:-0.12px;">Erstellt von</div>
<div class="t" style="left:1430px;top:182.0px;font-size:12px;color:#000;letter-spacing:-0.12px;">smtUser</div>
<div class="a" style="left:1271px;top:217px;width:329px;height:1px;background:#f0f0f0"></div>
<div class="t" style="left:1274px;top:201.0px;font-size:12px;color:#000;letter-spacing:-0.12px;">Geändert</div>
<div class="t" style="left:1430px;top:201.0px;font-size:12px;color:#000;letter-spacing:-0.62px;">14.08.2013 09:21:20</div>
<div class="a" style="left:1271px;top:236px;width:329px;height:1px;background:#f0f0f0"></div>
<div class="t" style="left:1274px;top:220.0px;font-size:12px;color:#000;letter-spacing:-0.12px;">Aktualisiert von</div>
<div class="t" style="left:1430px;top:220.0px;font-size:12px;color:#000;letter-spacing:-0.12px;">sa</div>
<div class="a" style="left:1271px;top:255px;width:329px;height:1px;background:#f0f0f0"></div>
<div class="t" style="left:1274px;top:239.0px;font-size:12px;color:#8d8d8d;letter-spacing:-0.12px;">Verbergen</div>
<div class="t" style="left:1430px;top:239.0px;font-size:12px;color:#8d8d8d;letter-spacing:-0.12px;">Nein</div>
<div class="a" style="left:1251px;top:256px;width:349px;height:19px;background:#f0f0f0"></div>
<svg style="left:1256px;top:260px" width="9" height="9" viewBox="0 0 9 9"><defs><linearGradient id="pg" x1="0" y1="0" x2="0" y2="1"><stop offset="0" stop-color="#fff"/><stop offset="1" stop-color="#dcdcdc"/></linearGradient></defs><rect x="0.5" y="0.5" width="8" height="8" rx="1" fill="url(#pg)" stroke="#8a8a8a"/><path d="M2 4.5H7" stroke="#3a4a7a"/><path d="M4.5 2V7" stroke="#3a4a7a"/></svg>
<div class="t" style="left:1274px;top:257.0px;font-size:11.8px;font-weight:bold;color:#6d6d6d;letter-spacing:0.21px;">Benutzerdefinierte Felder</div>
<div class="clip" style="left:546px;top:0px;width:701px;height:367px;background:#eef1fa">
<div class="a" style="left:0px;top:0px;width:701px;height:367px;background:#f0f0f0;border-left:1px solid #8e8e8e;border-top:1px solid #8e8e8e;border-right:1px solid #8e8e8e"></div>
<div class="a" style="left:1px;top:20px;width:699px;height:1px;background:#8e8e8e"></div>
<div class="a" style="left:1px;top:21px;width:699px;height:346px;background:linear-gradient(90deg,#ffd87a,#ffea86)"></div>
<div class="a" style="left:5px;top:24px;width:691px;height:343px;background:#fff;border-left:1px solid #8e8e8e;border-top:1px solid #8e8e8e;border-right:1px solid #fff"></div>
<div class="a" style="left:6px;top:25px;width:689px;height:342px;background:#fff;border-left:1px solid #686868;border-top:1px solid #686868;border-right:1px solid #e2e2e2"></div>
<svg style="left:685px;top:9px" width="9" height="5" viewBox="0 0 9 5"><path d="M0 0H9L4.5 5Z" fill="#000"/></svg>
<svg style="left:0px;top:0px" width="127" height="22" viewBox="0 0 127 22"><defs><linearGradient id="tg546" x1="0" y1="0" x2="0" y2="1"><stop offset="0" stop-color="#fffbb4"/><stop offset="0.48" stop-color="#fff592"/><stop offset="0.62" stop-color="#ffe07f"/><stop offset="0.75" stop-color="#ffd97a"/><stop offset="1" stop-color="#ffd87a"/></linearGradient></defs><path d="M1.5 21.5 L1.5 20.5 L20 2.5 L122 2.5 Q125.5 2.5 125.5 5.5 L125.5 21.5 Z" fill="url(#tg546)" stroke="#6e6e6e" stroke-width="1"/><path d="M2.5 20.5 L20.5 3.5 L122 3.5" stroke="#fffde0" stroke-width="1" fill="none" opacity="0.7"/><rect x="1" y="20.6" width="125" height="1.4" fill="#ffd97c"/></svg>
<div class="t" style="left:35.5px;top:3.5px;font-size:11px;font-weight:bold;color:#000;letter-spacing:-0.12px;">Abteilungen</div>
<svg style="left:112px;top:9px" width="8" height="7" viewBox="0 0 8 7"><path d="M0.6 0.5L7.4 6.5M7.4 0.5L0.6 6.5" stroke="#000" stroke-width="1.5"/></svg>
<div class="clip" style="left:7px;top:26px;width:687px;height:341px">
<div class="a" style="left:0px;top:0px;width:690px;height:22px;background:linear-gradient(#fff,#fff 45%,#f1f1f1 52%,#f1f1f1)"></div>
<div class="a" style="left:0px;top:22px;width:690px;height:1px;background:#dedede"></div>
<div class="t" style="left:6px;top:4.5px;font-size:12px;color:#000;letter-spacing:-0.12px;">Name</div>
<div class="t" style="left:106px;top:4.5px;font-size:12px;color:#000;letter-spacing:-0.12px;">Beschreibung</div>
<div class="a" style="left:99px;top:0px;width:1px;height:22px;background:#e0e0e0"></div>
<div class="a" style="left:100px;top:23px;width:1px;height:341px;background:#ededed"></div>
<div class="a" style="left:199px;top:0px;width:1px;height:22px;background:#e0e0e0"></div>
<div class="a" style="left:200px;top:23px;width:1px;height:341px;background:#ededed"></div>
<div class="a" style="left:0px;top:42px;width:690px;height:1px;background:#ececec"></div>
<div class="a" style="left:4px;top:24px;width:96px;height:18px;background:#3399ff"></div>
<div class="clip" style="left:0px;top:24px;width:99px;height:18px">
<div class="t" style="left:6px;top:3.0px;font-size:12px;color:#fff;letter-spacing:-0.12px;">Fashion</div>
</div>
<div class="a" style="left:101px;top:24px;width:99px;height:18px;background:#3399ff"></div>
<div class="clip" style="left:100px;top:24px;width:99px;height:18px">
<div class="t" style="left:6px;top:3.0px;font-size:12px;color:#fff;letter-spacing:-0.12px;">Fashion</div>
</div>
<div class="a" style="left:0px;top:61px;width:690px;height:1px;background:#ececec"></div>
<div class="clip" style="left:0px;top:43px;width:99px;height:18px">
<div class="t" style="left:6px;top:3.0px;font-size:12px;color:#000;letter-spacing:-0.12px;">Marketing</div>
</div>
<div class="clip" style="left:100px;top:43px;width:99px;height:18px">
<div class="t" style="left:6px;top:3.0px;font-size:12px;color:#000;letter-spacing:-0.12px;">Marketing</div>
</div>
<div class="a" style="left:0px;top:80px;width:690px;height:1px;background:#ececec"></div>
<div class="clip" style="left:0px;top:62px;width:99px;height:18px">
<div class="t" style="left:6px;top:3.0px;font-size:12px;color:#000;letter-spacing:-0.12px;">Textiles</div>
</div>
<div class="clip" style="left:100px;top:62px;width:99px;height:18px">
<div class="t" style="left:6px;top:3.0px;font-size:12px;color:#000;letter-spacing:-0.12px;">Textiles</div>
</div>
<div class="a" style="left:0px;top:99px;width:690px;height:1px;background:#ececec"></div>
<div class="clip" style="left:0px;top:81px;width:99px;height:18px">
<div class="t" style="left:6px;top:3.0px;font-size:12px;color:#000;letter-spacing:-0.12px;">Design</div>
</div>
<div class="clip" style="left:100px;top:81px;width:99px;height:18px">
<div class="t" style="left:6px;top:3.0px;font-size:12px;color:#000;letter-spacing:-0.12px;">Design</div>
</div>
<div class="a" style="left:0px;top:118px;width:690px;height:1px;background:#ececec"></div>
<div class="clip" style="left:0px;top:100px;width:99px;height:18px">
<div class="t" style="left:6px;top:3.0px;font-size:12px;color:#000;letter-spacing:-0.12px;">Lernende</div>
</div>
<div class="clip" style="left:100px;top:100px;width:99px;height:18px">
<div class="t" style="left:6px;top:3.0px;font-size:12px;color:#000;letter-spacing:-0.12px;">Lernende</div>
</div>
<div class="a" style="left:0px;top:137px;width:690px;height:1px;background:#ececec"></div>
<div class="a" style="left:0px;top:156px;width:690px;height:1px;background:#ececec"></div>
<div class="a" style="left:0px;top:175px;width:690px;height:1px;background:#ececec"></div>
<div class="a" style="left:0px;top:194px;width:690px;height:1px;background:#ececec"></div>
<div class="a" style="left:0px;top:213px;width:690px;height:1px;background:#ececec"></div>
<div class="a" style="left:0px;top:232px;width:690px;height:1px;background:#ececec"></div>
<div class="a" style="left:0px;top:251px;width:690px;height:1px;background:#ececec"></div>
<div class="a" style="left:0px;top:270px;width:690px;height:1px;background:#ececec"></div>
<div class="a" style="left:0px;top:289px;width:690px;height:1px;background:#ececec"></div>
<div class="a" style="left:0px;top:308px;width:690px;height:1px;background:#ececec"></div>
<div class="a" style="left:0px;top:327px;width:690px;height:1px;background:#ececec"></div>
<div class="a" style="left:0px;top:346px;width:690px;height:1px;background:#ececec"></div>
</div>
</div>
<div class="clip" style="left:603px;top:77px;width:308px;height:152px;background:#eef1fa">
<div class="a" style="left:5px;top:2px;width:303px;height:150px;background:#f0f0f0;border-left:1px solid #8e8e8e;border-top:1px solid #8e8e8e"></div>
<div class="a" style="left:6px;top:22px;width:302px;height:1px;background:#8e8e8e"></div>
<div class="a" style="left:6px;top:23px;width:302px;height:129px;background:linear-gradient(90deg,#ffd87a,#ffdf7e)"></div>
<div class="a" style="left:10px;top:26px;width:298px;height:126px;background:#fff;border-left:1px solid #8e8e8e;border-top:1px solid #8e8e8e"></div>
<div class="a" style="left:11px;top:27px;width:297px;height:125px;background:#fff;border-left:1px solid #686868;border-top:1px solid #686868"></div>
<svg style="left:5px;top:2px" width="136" height="22" viewBox="0 0 136 22"><defs><linearGradient id="tg608" x1="0" y1="0" x2="0" y2="1"><stop offset="0" stop-color="#fffbb4"/><stop offset="0.48" stop-color="#fff592"/><stop offset="0.62" stop-color="#ffe07f"/><stop offset="0.75" stop-color="#ffd97a"/><stop offset="1" stop-color="#ffd87a"/></linearGradient></defs><path d="M1.5 21.5 L1.5 20.5 L20 2.5 L131 2.5 Q134.5 2.5 134.5 5.5 L134.5 21.5 Z" fill="url(#tg608)" stroke="#6e6e6e" stroke-width="1"/><path d="M2.5 20.5 L20.5 3.5 L131 3.5" stroke="#fffde0" stroke-width="1" fill="none" opacity="0.7"/><rect x="1" y="20.6" width="134" height="1.4" fill="#ffd97c"/></svg>
<div class="t" style="left:40.5px;top:5.5px;font-size:11px;font-weight:bold;color:#000;letter-spacing:-0.12px;">Ausbildungen</div>
<svg style="left:126px;top:11px" width="8" height="7" viewBox="0 0 8 7"><path d="M0.6 0.5L7.4 6.5M7.4 0.5L0.6 6.5" stroke="#000" stroke-width="1.5"/></svg>
<div class="clip" style="left:12px;top:28px;width:296px;height:124px">
<div class="a" style="left:0px;top:0px;width:297px;height:22px;background:linear-gradient(#fff,#fff 45%,#f1f1f1 52%,#f1f1f1)"></div>
<div class="a" style="left:0px;top:22px;width:297px;height:1px;background:#dedede"></div>
<div class="t" style="left:6px;top:4.5px;font-size:12px;color:#000;letter-spacing:-0.12px;">Name</div>
<div class="t" style="left:156px;top:4.5px;font-size:12px;color:#000;letter-spacing:-0.12px;">Beschreibung</div>
<div class="a" style="left:149px;top:0px;width:1px;height:22px;background:#e0e0e0"></div>
<div class="a" style="left:150px;top:23px;width:1px;height:124px;background:#ededed"></div>
<div class="a" style="left:249px;top:0px;width:1px;height:22px;background:#e0e0e0"></div>
<div class="a" style="left:250px;top:23px;width:1px;height:124px;background:#ededed"></div>
<div class="a" style="left:0px;top:42px;width:297px;height:1px;background:#ececec"></div>
<div class="clip" style="left:0px;top:24px;width:149px;height:18px">
<div class="t" style="left:6px;top:3.0px;font-size:12px;color:#000;letter-spacing:-0.12px;">Fashiondesigner</div>
</div>
<div class="clip" style="left:150px;top:24px;width:99px;height:18px">
<div class="t" style="left:6px;top:3.0px;font-size:12px;color:#000;letter-spacing:-0.12px;"></div>
</div>
<div class="a" style="left:0px;top:61px;width:297px;height:1px;background:#ececec"></div>
<div class="clip" style="left:0px;top:43px;width:149px;height:18px">
<div class="t" style="left:6px;top:3.0px;font-size:12px;color:#000;letter-spacing:-0.12px;">Fashion Assistant</div>
</div>
<div class="clip" style="left:150px;top:43px;width:99px;height:18px">
<div class="t" style="left:6px;top:3.0px;font-size:12px;color:#000;letter-spacing:-0.12px;"></div>
</div>
<div class="a" style="left:0px;top:80px;width:297px;height:1px;background:#ececec"></div>
<div class="clip" style="left:0px;top:62px;width:149px;height:18px">
<div class="t" style="left:6px;top:3.0px;font-size:12px;color:#000;letter-spacing:-0.12px;">Dipl.Techniker HF Textil</div>
</div>
<div class="clip" style="left:150px;top:62px;width:99px;height:18px">
<div class="t" style="left:6px;top:3.0px;font-size:12px;color:#000;letter-spacing:-0.12px;"></div>
</div>
<div class="a" style="left:0px;top:99px;width:297px;height:1px;background:#ececec"></div>
<div class="a" style="left:0px;top:118px;width:297px;height:1px;background:#ececec"></div>
<div class="a" style="left:0px;top:137px;width:297px;height:1px;background:#ececec"></div>
</div>
</div>
<div class="clip" style="left:678px;top:128px;width:262px;height:167px;background:#eef1fa">
<div class="a" style="left:0px;top:4px;width:3px;height:19px;background:#a9c3df"></div>
<div class="a" style="left:7px;top:4px;width:255px;height:163px;background:#f0f0f0;border-left:1px solid #8e8e8e;border-top:1px solid #8e8e8e"></div>
<div class="a" style="left:8px;top:24px;width:254px;height:1px;background:#8e8e8e"></div>
<div class="a" style="left:8px;top:25px;width:254px;height:142px;background:linear-gradient(90deg,#ffd87a,#ffdf7e)"></div>
<div class="a" style="left:12px;top:28px;width:250px;height:139px;background:#fff;border-left:1px solid #8e8e8e;border-top:1px solid #8e8e8e"></div>
<div class="a" style="left:13px;top:29px;width:249px;height:138px;background:#fff;border-left:1px solid #686868;border-top:1px solid #686868"></div>
<svg style="left:7px;top:4px" width="125" height="22" viewBox="0 0 125 22"><defs><linearGradient id="tg685" x1="0" y1="0" x2="0" y2="1"><stop offset="0" stop-color="#fffbb4"/><stop offset="0.48" stop-color="#fff592"/><stop offset="0.62" stop-color="#ffe07f"/><stop offset="0.75" stop-color="#ffd97a"/><stop offset="1" stop-color="#ffd87a"/></linearGradient></defs><path d="M1.5 21.5 L1.5 20.5 L20 2.5 L120 2.5 Q123.5 2.5 123.5 5.5 L123.5 21.5 Z" fill="url(#tg685)" stroke="#6e6e6e" stroke-width="1"/><path d="M2.5 20.5 L20.5 3.5 L120 3.5" stroke="#fffde0" stroke-width="1" fill="none" opacity="0.7"/><rect x="1" y="20.6" width="123" height="1.4" fill="#ffd97c"/></svg>
<div class="t" style="left:42.5px;top:7.5px;font-size:11px;font-weight:bold;color:#000;letter-spacing:-0.12px;">Reglemente</div>
<svg style="left:117px;top:13px" width="8" height="7" viewBox="0 0 8 7"><path d="M0.6 0.5L7.4 6.5M7.4 0.5L0.6 6.5" stroke="#000" stroke-width="1.5"/></svg>
<div class="clip" style="left:14px;top:30px;width:248px;height:137px">
<div class="a" style="left:0px;top:0px;width:249px;height:22px;background:linear-gradient(#fff,#fff 45%,#f1f1f1 52%,#f1f1f1)"></div>
<div class="a" style="left:0px;top:22px;width:249px;height:1px;background:#dedede"></div>
<div class="t" style="left:6px;top:4.5px;font-size:12px;color:#000;letter-spacing:-0.12px;">Name</div>
<div class="t" style="left:106px;top:4.5px;font-size:12px;color:#000;letter-spacing:-0.12px;">Beschreibung</div>
<div class="a" style="left:99px;top:0px;width:1px;height:22px;background:#e0e0e0"></div>
<div class="a" style="left:100px;top:23px;width:1px;height:137px;background:#ededed"></div>
<div class="a" style="left:199px;top:0px;width:1px;height:22px;background:#e0e0e0"></div>
<div class="a" style="left:200px;top:23px;width:1px;height:137px;background:#ededed"></div>
<div class="a" style="left:0px;top:42px;width:249px;height:1px;background:#ececec"></div>
<div class="clip" style="left:0px;top:24px;width:99px;height:18px">
<div class="t" style="left:6px;top:3.0px;font-size:12px;color:#000;letter-spacing:-0.12px;">136/137 Techn....</div>
</div>
<div class="clip" style="left:100px;top:24px;width:99px;height:18px">
<div class="t" style="left:6px;top:3.0px;font-size:12px;color:#000;letter-spacing:-0.12px;">Dipl.Techniker...</div>
</div>
<div class="a" style="left:0px;top:61px;width:249px;height:1px;background:#ececec"></div>
<div class="clip" style="left:0px;top:43px;width:99px;height:18px">
<div class="t" style="left:6px;top:3.0px;font-size:12px;color:#000;letter-spacing:-0.12px;">136/137 Techn....</div>
</div>
<div class="clip" style="left:100px;top:43px;width:99px;height:18px">
<div class="t" style="left:6px;top:3.0px;font-size:12px;color:#000;letter-spacing:-0.12px;">Dipl.Techniker...</div>
</div>
<div class="a" style="left:0px;top:80px;width:249px;height:1px;background:#ececec"></div>
<div class="clip" style="left:0px;top:62px;width:99px;height:18px">
<div class="t" style="left:6px;top:3.0px;font-size:12px;color:#000;letter-spacing:-0.12px;">FDT Techn.Textil v15</div>
</div>
<div class="clip" style="left:100px;top:62px;width:99px;height:18px">
<div class="t" style="left:6px;top:3.0px;font-size:12px;color:#000;letter-spacing:-0.12px;">Dipl.Techniker...</div>
</div>
<div class="a" style="left:0px;top:99px;width:249px;height:1px;background:#ececec"></div>
<div class="a" style="left:0px;top:118px;width:249px;height:1px;background:#ececec"></div>
<div class="a" style="left:0px;top:137px;width:249px;height:1px;background:#ececec"></div>
</div>
</div>
<div class="clip" style="left:755px;top:197px;width:256px;height:134px;background:#eef1fa">
<div class="a" style="left:0px;top:3px;width:3px;height:19px;background:#a9c3df"></div>
<div class="a" style="left:7px;top:3px;width:249px;height:131px;background:#f0f0f0;border-left:1px solid #8e8e8e;border-top:1px solid #8e8e8e"></div>
<div class="a" style="left:8px;top:23px;width:248px;height:1px;background:#8e8e8e"></div>
<div class="a" style="left:8px;top:24px;width:248px;height:110px;background:linear-gradient(90deg,#ffd87a,#ffdf7e)"></div>
<div class="a" style="left:12px;top:27px;width:244px;height:107px;background:#fff;border-left:1px solid #8e8e8e;border-top:1px solid #8e8e8e"></div>
<div class="a" style="left:13px;top:28px;width:243px;height:106px;background:#fff;border-left:1px solid #686868;border-top:1px solid #686868"></div>
<svg style="left:7px;top:3px" width="112" height="22" viewBox="0 0 112 22"><defs><linearGradient id="tg762" x1="0" y1="0" x2="0" y2="1"><stop offset="0" stop-color="#fffbb4"/><stop offset="0.48" stop-color="#fff592"/><stop offset="0.62" stop-color="#ffe07f"/><stop offset="0.75" stop-color="#ffd97a"/><stop offset="1" stop-color="#ffd87a"/></linearGradient></defs><path d="M1.5 21.5 L1.5 20.5 L20 2.5 L107 2.5 Q110.5 2.5 110.5 5.5 L110.5 21.5 Z" fill="url(#tg762)" stroke="#6e6e6e" stroke-width="1"/><path d="M2.5 20.5 L20.5 3.5 L107 3.5" stroke="#fffde0" stroke-width="1" fill="none" opacity="0.7"/><rect x="1" y="20.6" width="110" height="1.4" fill="#ffd97c"/></svg>
<div class="t" style="left:42.5px;top:6.5px;font-size:11px;font-weight:bold;color:#000;letter-spacing:-0.12px;">Varianten</div>
<svg style="left:104px;top:12px" width="8" height="7" viewBox="0 0 8 7"><path d="M0.6 0.5L7.4 6.5M7.4 0.5L0.6 6.5" stroke="#000" stroke-width="1.5"/></svg>
<div class="clip" style="left:14px;top:29px;width:242px;height:105px">
<div class="a" style="left:0px;top:0px;width:243px;height:22px;background:linear-gradient(#fff,#fff 45%,#f1f1f1 52%,#f1f1f1)"></div>
<div class="a" style="left:0px;top:22px;width:243px;height:1px;background:#dedede"></div>
<div class="t" style="left:6px;top:4.5px;font-size:12px;color:#000;letter-spacing:-0.12px;">Variante</div>
<div class="t" style="left:106px;top:4.5px;font-size:12px;color:#000;letter-spacing:-0.12px;">Beschreibung</div>
<div class="a" style="left:99px;top:0px;width:1px;height:22px;background:#e0e0e0"></div>
<div class="a" style="left:100px;top:23px;width:1px;height:105px;background:#ededed"></div>
<div class="a" style="left:199px;top:0px;width:1px;height:22px;background:#e0e0e0"></div>
<div class="a" style="left:200px;top:23px;width:1px;height:105px;background:#ededed"></div>
<div class="a" style="left:0px;top:42px;width:243px;height:1px;background:#ececec"></div>
<div class="clip" style="left:0px;top:24px;width:99px;height:18px">
<div class="t" style="left:6px;top:3.0px;font-size:12px;color:#000;letter-spacing:-0.12px;">Dipl.Tech Textil</div>
</div>
<div class="clip" style="left:100px;top:24px;width:99px;height:18px">
<div class="t" style="left:6px;top:3.0px;font-size:12px;color:#000;letter-spacing:-0.12px;"></div>
</div>
<div class="a" style="left:0px;top:61px;width:243px;height:1px;background:#ececec"></div>
<div class="a" style="left:0px;top:80px;width:243px;height:1px;background:#ececec"></div>
<div class="a" style="left:0px;top:99px;width:243px;height:1px;background:#ececec"></div>
<div class="a" style="left:0px;top:118px;width:243px;height:1px;background:#ececec"></div>
</div>
</div>
<div class="clip" style="left:830px;top:255px;width:237px;height:162px;background:#eef1fa">
<div class="a" style="left:0px;top:5px;width:3px;height:19px;background:#a9c3df"></div>
<div class="a" style="left:7px;top:5px;width:230px;height:157px;background:#f0f0f0;border-left:1px solid #8e8e8e;border-top:1px solid #8e8e8e"></div>
<div class="a" style="left:8px;top:25px;width:229px;height:1px;background:#8e8e8e"></div>
<div class="a" style="left:8px;top:26px;width:229px;height:136px;background:linear-gradient(90deg,#ffd87a,#ffdf7e)"></div>
<div class="a" style="left:12px;top:29px;width:225px;height:133px;background:#fff;border-left:1px solid #8e8e8e;border-top:1px solid #8e8e8e"></div>
<div class="a" style="left:13px;top:30px;width:224px;height:132px;background:#fff;border-left:1px solid #686868;border-top:1px solid #686868"></div>
<svg style="left:7px;top:5px" width="126" height="22" viewBox="0 0 126 22"><defs><linearGradient id="tg837" x1="0" y1="0" x2="0" y2="1"><stop offset="0" stop-color="#fffbb4"/><stop offset="0.48" stop-color="#fff592"/><stop offset="0.62" stop-color="#ffe07f"/><stop offset="0.75" stop-color="#ffd97a"/><stop offset="1" stop-color="#ffd87a"/></linearGradient></defs><path d="M1.5 21.5 L1.5 20.5 L20 2.5 L121 2.5 Q124.5 2.5 124.5 5.5 L124.5 21.5 Z" fill="url(#tg837)" stroke="#6e6e6e" stroke-width="1"/><path d="M2.5 20.5 L20.5 3.5 L121 3.5" stroke="#fffde0" stroke-width="1" fill="none" opacity="0.7"/><rect x="1" y="20.6" width="124" height="1.4" fill="#ffd97c"/></svg>
<div class="t" style="left:42.5px;top:8.5px;font-size:11px;font-weight:bold;color:#000;letter-spacing:-0.12px;">Definitionen</div>
<svg style="left:118px;top:14px" width="8" height="7" viewBox="0 0 8 7"><path d="M0.6 0.5L7.4 6.5M7.4 0.5L0.6 6.5" stroke="#000" stroke-width="1.5"/></svg>
<div class="clip" style="left:14px;top:31px;width:223px;height:131px">
<div class="a" style="left:0px;top:0px;width:224px;height:22px;background:linear-gradient(#fff,#fff 45%,#f1f1f1 52%,#f1f1f1)"></div>
<div class="a" style="left:0px;top:22px;width:224px;height:1px;background:#dedede"></div>
<div class="t" style="left:6px;top:4.5px;font-size:12px;color:#000;letter-spacing:-0.12px;">Name</div>
<div class="t" style="left:106px;top:4.5px;font-size:12px;color:#000;letter-spacing:-0.12px;">Beschreibung</div>
<div class="a" style="left:99px;top:0px;width:1px;height:22px;background:#e0e0e0"></div>
<div class="a" style="left:100px;top:23px;width:1px;height:131px;background:#ededed"></div>
<div class="a" style="left:199px;top:0px;width:1px;height:22px;background:#e0e0e0"></div>
<div class="a" style="left:200px;top:23px;width:1px;height:131px;background:#ededed"></div>
<div class="a" style="left:0px;top:42px;width:224px;height:1px;background:#ececec"></div>
<div class="clip" style="left:0px;top:24px;width:99px;height:18px">
<div class="t" style="left:6px;top:3.0px;font-size:12px;color:#000;letter-spacing:-0.59px;">FDT1_Semester 1v15</div>
</div>
<div class="clip" style="left:100px;top:24px;width:99px;height:18px">
<div class="t" style="left:6px;top:3.0px;font-size:12px;color:#000;letter-spacing:-0.12px;">FDT1 Semester 1 V...</div>
</div>
<div class="a" style="left:0px;top:61px;width:224px;height:1px;background:#ececec"></div>
<div class="clip" style="left:0px;top:43px;width:99px;height:18px">
<div class="t" style="left:6px;top:3.0px;font-size:12px;color:#000;letter-spacing:-0.59px;">FDT2_Semester 2v15</div>
</div>
<div class="clip" style="left:100px;top:43px;width:99px;height:18px">
<div class="t" style="left:6px;top:3.0px;font-size:12px;color:#000;letter-spacing:-0.12px;"></div>
</div>
<div class="a" style="left:0px;top:80px;width:224px;height:1px;background:#ececec"></div>
<div class="clip" style="left:0px;top:62px;width:99px;height:18px">
<div class="t" style="left:6px;top:3.0px;font-size:12px;color:#000;letter-spacing:-0.59px;">FDT3_Semester 3v15</div>
</div>
<div class="clip" style="left:100px;top:62px;width:99px;height:18px">
<div class="t" style="left:6px;top:3.0px;font-size:12px;color:#000;letter-spacing:-0.12px;"></div>
</div>
<div class="a" style="left:0px;top:99px;width:224px;height:1px;background:#ececec"></div>
<div class="clip" style="left:0px;top:81px;width:99px;height:18px">
<div class="t" style="left:6px;top:3.0px;font-size:12px;color:#000;letter-spacing:-0.59px;">FDT4_Semester 4v15</div>
</div>
<div class="clip" style="left:100px;top:81px;width:99px;height:18px">
<div class="t" style="left:6px;top:3.0px;font-size:12px;color:#000;letter-spacing:-0.12px;"></div>
</div>
<div class="a" style="left:0px;top:118px;width:224px;height:1px;background:#ececec"></div>
<div class="a" style="left:0px;top:137px;width:224px;height:1px;background:#ececec"></div>
</div>
</div>
<div class="clip" style="left:881px;top:317px;width:295px;height:135px;background:#eef1fa">
<div class="a" style="left:5px;top:3px;width:290px;height:132px;background:#f0f0f0;border-left:1px solid #8e8e8e;border-top:1px solid #8e8e8e"></div>
<div class="a" style="left:6px;top:23px;width:289px;height:1px;background:#8e8e8e"></div>
<div class="a" style="left:6px;top:24px;width:289px;height:111px;background:linear-gradient(90deg,#ffd87a,#ffdf7e)"></div>
<div class="a" style="left:10px;top:27px;width:285px;height:108px;background:#fff;border-left:1px solid #8e8e8e;border-top:1px solid #8e8e8e"></div>
<div class="a" style="left:11px;top:28px;width:284px;height:107px;background:#fff;border-left:1px solid #686868;border-top:1px solid #686868"></div>
<svg style="left:5px;top:3px" width="166" height="22" viewBox="0 0 166 22"><defs><linearGradient id="tg886" x1="0" y1="0" x2="0" y2="1"><stop offset="0" stop-color="#fffbb4"/><stop offset="0.48" stop-color="#fff592"/><stop offset="0.62" stop-color="#ffe07f"/><stop offset="0.75" stop-color="#ffd97a"/><stop offset="1" stop-color="#ffd87a"/></linearGradient></defs><path d="M1.5 21.5 L1.5 20.5 L20 2.5 L161 2.5 Q164.5 2.5 164.5 5.5 L164.5 21.5 Z" fill="url(#tg886)" stroke="#6e6e6e" stroke-width="1"/><path d="M2.5 20.5 L20.5 3.5 L161 3.5" stroke="#fffde0" stroke-width="1" fill="none" opacity="0.7"/><rect x="1" y="20.6" width="164" height="1.4" fill="#ffd97c"/></svg>
<div class="t" style="left:40.5px;top:6.5px;font-size:11px;font-weight:bold;color:#000;letter-spacing:-0.12px;transform:scaleX(0.96);transform-origin:0 0;">Leistungsnachweise</div>
<svg style="left:156px;top:12px" width="8" height="7" viewBox="0 0 8 7"><path d="M0.6 0.5L7.4 6.5M7.4 0.5L0.6 6.5" stroke="#000" stroke-width="1.5"/></svg>
<div class="clip" style="left:12px;top:29px;width:283px;height:106px">
<div class="a" style="left:0px;top:0px;width:284px;height:22px;background:linear-gradient(#fff,#fff 45%,#f1f1f1 52%,#f1f1f1)"></div>
<div class="a" style="left:0px;top:22px;width:284px;height:1px;background:#dedede"></div>
<div class="t" style="left:6px;top:4.5px;font-size:12px;color:#000;letter-spacing:-0.12px;">Name</div>
<div class="t" style="left:162px;top:4.5px;font-size:12px;color:#000;letter-spacing:-0.12px;">Beschreibung</div>
<div class="t" style="left:262px;top:4.5px;font-size:12px;color:#000;letter-spacing:-0.12px;">Datei</div>
<div class="a" style="left:155px;top:0px;width:1px;height:22px;background:#e0e0e0"></div>
<div class="a" style="left:156px;top:23px;width:1px;height:106px;background:#ededed"></div>
<div class="a" style="left:255px;top:0px;width:1px;height:22px;background:#e0e0e0"></div>
<div class="a" style="left:256px;top:23px;width:1px;height:106px;background:#ededed"></div>
<div class="a" style="left:355px;top:0px;width:1px;height:22px;background:#e0e0e0"></div>
<div class="a" style="left:356px;top:23px;width:1px;height:106px;background:#ededed"></div>
<div class="a" style="left:0px;top:42px;width:284px;height:1px;background:#ececec"></div>
<div class="clip" style="left:0px;top:24px;width:155px;height:18px">
<div class="t" style="left:6px;top:3.0px;font-size:12px;color:#000;letter-spacing:-0.27px;">FDT2_NotenübersichtJ1v15</div>
</div>
<div class="clip" style="left:156px;top:24px;width:99px;height:18px">
<div class="t" style="left:6px;top:3.0px;font-size:12px;color:#000;letter-spacing:-0.02px;">FDT2 Notenüb...</div>
</div>
<div class="a" style="left:0px;top:61px;width:284px;height:1px;background:#ececec"></div>
<div class="clip" style="left:0px;top:43px;width:155px;height:18px">
<div class="t" style="left:6px;top:3.0px;font-size:12px;color:#000;letter-spacing:-0.27px;">FDT1_NotenübersichtS1v15</div>
</div>
<div class="clip" style="left:156px;top:43px;width:99px;height:18px">
<div class="t" style="left:6px;top:3.0px;font-size:12px;color:#000;letter-spacing:-0.02px;">FDT1 Notenüb...</div>
</div>
<div class="a" style="left:0px;top:80px;width:284px;height:1px;background:#ececec"></div>
<div class="clip" style="left:0px;top:62px;width:155px;height:18px">
<div class="t" style="left:6px;top:3.0px;font-size:12px;color:#000;letter-spacing:-0.49px;">FDT2_Zeugnis Jahr 1v15</div>
</div>
<div class="clip" style="left:156px;top:62px;width:99px;height:18px">
<div class="t" style="left:6px;top:3.0px;font-size:12px;color:#000;letter-spacing:-0.28px;">FDT2 Zeugnis J...</div>
</div>
<div class="a" style="left:0px;top:99px;width:284px;height:1px;background:#ececec"></div>
<div class="a" style="left:0px;top:118px;width:284px;height:1px;background:#ececec"></div>
</div>
</div>
</body></html>
